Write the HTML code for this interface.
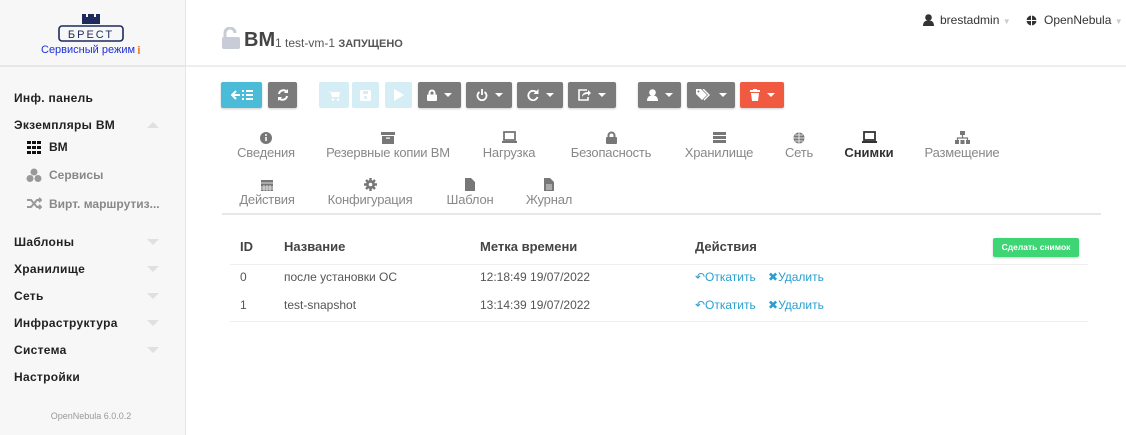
<!DOCTYPE html>
<html><head><meta charset="utf-8"><style>
*{box-sizing:border-box;margin:0;padding:0}
body{width:1126px;height:435px;background:#fff;font-family:"Liberation Sans","DejaVu Sans",sans-serif;position:relative;overflow:hidden;color:#333}
.a{position:absolute;white-space:nowrap}
#side{position:absolute;left:0;top:0;width:186px;height:435px;background:#f7f7f7;border-right:1px solid #e6e6e6}
.nav{position:absolute;left:14px;font-size:12px;font-weight:bold;color:#222;letter-spacing:.3px}
.caret{position:absolute;left:147px;width:0;height:0;border-left:6px solid transparent;border-right:6px solid transparent}
.btn{position:absolute;top:82px;height:26px;border-radius:2px;color:#fff;font-size:12px;display:flex;align-items:center;justify-content:center;gap:7px;box-shadow:0 1px 2px rgba(0,0,0,.2)}
.g{background:#7b7b7b}
.dc{width:0;height:0;border-left:4px solid transparent;border-right:4px solid transparent;border-top:4px solid #fff}
.tab{position:absolute;text-align:center;font-size:13px;color:#888;white-space:nowrap;letter-spacing:-.2px}
.tab svg{display:block;margin:0 auto 1px}
.th{position:absolute;top:239px;font-size:13px;font-weight:bold;color:#444}
.td{position:absolute;font-size:12px;color:#555}
.lk{position:absolute;font-size:12px;color:#2a9fd0}
</style></head><body>
<div id="side">
 <svg class="a" style="left:57px;top:13px" width="68" height="30" viewBox="0 0 68 30">
  <path d="M25 1h4v3h2V1h6v3h2V1h4v10H25z" fill="#1d2a5e"/>
  <rect x="2" y="13" width="64" height="15" rx="3" fill="none" stroke="#1d2a5e" stroke-width="1.6"/>
  <text x="34" y="25" text-anchor="middle" font-size="11" font-family="Liberation Sans" fill="#1d2a5e" letter-spacing="2">БРЕСТ</text>
 </svg>
 <div class="a" style="left:41px;top:44px;font-size:11px;color:#1c2fd6">Сервисный режим</div>
 <div class="a" style="left:137px;top:44px;font-size:11px;color:#f0884a;font-weight:bold">ⅰ</div>
 <div class="a" style="left:0;top:65px;width:186px;height:2px;background:#e6e6e6"></div>
 <div class="nav" style="top:91px">Инф. панель</div>
 <div class="nav" style="top:118px">Экземпляры ВМ</div>
 <div class="caret" style="top:122px;border-bottom:6px solid #e0e0e0"></div>
 <svg class="a" style="left:27px;top:141px" width="15" height="13"><g fill="#111"><rect x="0" y="0" width="4" height="3"/><rect x="5" y="0" width="4" height="3"/><rect x="10" y="0" width="4" height="3"/><rect x="0" y="5" width="4" height="3"/><rect x="5" y="5" width="4" height="3"/><rect x="10" y="5" width="4" height="3"/><rect x="0" y="10" width="4" height="3"/><rect x="5" y="10" width="4" height="3"/><rect x="10" y="10" width="4" height="3"/></g></svg>
 <div class="a" style="left:49px;top:140px;font-size:12px;font-weight:bold;color:#222">ВМ</div>
 <svg class="a" style="left:26px;top:168px" width="16" height="15"><g fill="#999"><circle cx="8" cy="4" r="3.5"/><circle cx="4" cy="10.5" r="3.5"/><circle cx="12" cy="10.5" r="3.5"/></g></svg>
 <div class="a" style="left:49px;top:168px;font-size:12px;font-weight:bold;color:#888">Сервисы</div>
 <svg class="a" style="left:26px;top:197px" width="16" height="13"><path d="M1 3h4l6 7h4M1 10h4l6-7h4M13 1l2 2-2 2M13 8l2 2-2 2" fill="none" stroke="#999" stroke-width="2"/></svg>
 <div class="a" style="left:49px;top:197px;font-size:12px;font-weight:bold;color:#888">Вирт. маршрутиз...</div>
 <div class="nav" style="top:235px">Шаблоны</div><div class="caret" style="top:239px;border-top:6px solid #e0e0e0"></div>
 <div class="nav" style="top:262px">Хранилище</div><div class="caret" style="top:266px;border-top:6px solid #e0e0e0"></div>
 <div class="nav" style="top:289px">Сеть</div><div class="caret" style="top:293px;border-top:6px solid #e0e0e0"></div>
 <div class="nav" style="top:316px">Инфраструктура</div><div class="caret" style="top:320px;border-top:6px solid #e0e0e0"></div>
 <div class="nav" style="top:343px">Система</div><div class="caret" style="top:347px;border-top:6px solid #e0e0e0"></div>
 <div class="nav" style="top:370px">Настройки</div>
 <div class="a" style="left:0;width:182px;text-align:center;top:411px;font-size:9px;color:#999">OpenNebula 6.0.0.2</div>
</div>

<svg class="a" style="left:221px;top:27px" width="19" height="22"><path d="M4 10V6a5 5 0 0 1 10 0" fill="none" stroke="#c8ccd6" stroke-width="3"/><rect x="1" y="10" width="18" height="12" rx="2" fill="#c8ccd6"/></svg>
<div class="a" style="left:244px;top:29px;font-size:20px;font-weight:bold;color:#444">ВМ</div>
<div class="a" style="left:275px;top:36px;font-size:12px;color:#555">1 test-vm-1 <b style="font-size:11px">ЗАПУЩЕНО</b></div>

<svg class="a" style="left:923px;top:14px" width="11" height="12"><circle cx="5.5" cy="3.5" r="3.3" fill="#333"/><path d="M0 12c0-4 2-5.5 5.5-5.5S11 8 11 12z" fill="#333"/></svg>
<div class="a" style="left:940px;top:13px;font-size:12px;color:#333">brestadmin <span style="color:#ccc;font-size:8px">▼</span></div>
<svg class="a" style="left:1026px;top:15px" width="11" height="11"><circle cx="5.5" cy="5.5" r="5" fill="#333"/><path d="M0.5 5.5h10M5.5 0.5v10" stroke="#fff" stroke-width="1"/></svg>
<div class="a" style="left:1044px;top:13px;font-size:12px;color:#333">OpenNebula <span style="color:#ccc;font-size:8px">▼</span></div>
<div class="a" style="left:186px;top:65px;width:940px;height:2px;background:#eee"></div>

<div class="btn" style="left:221px;width:41px;background:#4bbcd8"><svg width="22" height="12"><path d="M1 6h8M5 2L1 6l4 4" fill="none" stroke="#fff" stroke-width="2"/><path d="M11 2h2M11 6h2M11 10h2M15 2h7M15 6h7M15 10h7" stroke="#fff" stroke-width="2"/></svg></div>
<div class="btn g" style="left:268px;width:29px"><svg width="12" height="12"><path d="M2 5a4.5 4.5 0 0 1 8-2M10 7a4.5 4.5 0 0 1-8 2" fill="none" stroke="#fff" stroke-width="2"/><path d="M11 0v4H7zM1 12V8h4z" fill="#fff"/></svg></div>
<div class="btn" style="left:319px;width:30px;background:#d5eef6;box-shadow:none"><svg width="12" height="11"><path d="M0 1h2l2 6h7l1-5H3" fill="#fff"/><circle cx="5" cy="9.5" r="1.3" fill="#fff"/><circle cx="10" cy="9.5" r="1.3" fill="#fff"/></svg></div>
<div class="btn" style="left:352px;width:27px;background:#d5eef6;box-shadow:none"><svg width="11" height="11"><rect width="11" height="11" rx="1.5" fill="#fff"/><rect x="3" y="1" width="5" height="3" fill="#d5eef6"/><circle cx="5.5" cy="7.5" r="1.6" fill="#d5eef6"/></svg></div>
<div class="btn" style="left:385px;width:27px;background:#d5eef6;box-shadow:none"><svg width="10" height="12"><path d="M0 0l10 6-10 6z" fill="#fff"/></svg></div>
<div class="btn g" style="left:418px;width:43px"><svg width="10" height="12"><path d="M2.5 6V4a2.5 2.5 0 0 1 5 0v2" fill="none" stroke="#fff" stroke-width="2"/><rect y="5.5" width="10" height="6.5" rx="1" fill="#fff"/></svg><span class="dc"></span></div>
<div class="btn g" style="left:466px;width:46px"><svg width="12" height="12"><path d="M3.5 3a4.5 4.5 0 1 0 5 0" fill="none" stroke="#fff" stroke-width="1.8"/><path d="M6 0v6" stroke="#fff" stroke-width="1.8"/></svg><span class="dc"></span></div>
<div class="btn g" style="left:517px;width:46px"><svg width="12" height="12"><path d="M10 4a4.7 4.7 0 1 0 0.5 4" fill="none" stroke="#fff" stroke-width="1.8"/><path d="M11.5 0v5h-5z" fill="#fff"/></svg><span class="dc"></span></div>
<div class="btn g" style="left:568px;width:48px"><svg width="13" height="12"><path d="M9 1h-8v10h9V8" fill="none" stroke="#fff" stroke-width="1.6"/><path d="M4 8c0-3 2-5 6-5V1l3 3-3 3V5c-3 0-5 1-6 3z" fill="#fff"/></svg><span class="dc"></span></div>
<div class="btn g" style="left:638px;width:43px"><svg width="11" height="12"><circle cx="5.5" cy="3.5" r="3.3" fill="#fff"/><path d="M0 12c0-4 2-5.5 5.5-5.5S11 8 11 12z" fill="#fff"/></svg><span class="dc"></span></div>
<div class="btn g" style="left:687px;width:48px"><svg width="16" height="12"><path d="M0 0h5l6 6-5 5-6-6z" fill="#fff"/><circle cx="2.5" cy="2.5" r="1" fill="#7b7b7b"/><path d="M7 0l6 6-5 5" fill="none" stroke="#fff" stroke-width="1.4"/></svg><span class="dc"></span></div>
<div class="btn" style="left:740px;width:44px;background:#ef5a40"><svg width="10" height="12"><rect y="1" width="10" height="2" fill="#fff"/><rect x="3" y="0" width="4" height="1.5" fill="#fff"/><path d="M1 4h8l-1 8H2z" fill="#fff"/></svg><span class="dc"></span></div>

<div class="tab" style="left:230px;width:72px;top:131px"><svg width="12" height="13"><circle cx="6" cy="7" r="6" fill="#777"/><rect x="5.2" y="6" width="1.6" height="4" fill="#fff"/><circle cx="6" cy="4" r="1" fill="#fff"/></svg>Сведения</div>
<div class="tab" style="left:318px;width:140px;top:131px"><svg width="14" height="13"><rect y="1" width="14" height="3" fill="#777"/><rect x="1" y="5" width="12" height="8" fill="#777"/><rect x="5" y="6.5" width="4" height="1.2" fill="#fff"/></svg>Резервные копии ВМ</div>
<div class="tab" style="left:474px;width:70px;top:131px"><svg width="15" height="13"><rect x="2" y="1" width="11" height="8" fill="none" stroke="#777" stroke-width="1.8"/><rect x="0" y="10" width="15" height="2" fill="#777"/></svg>Нагрузка</div>
<div class="tab" style="left:564px;width:94px;top:131px"><svg width="11" height="13"><path d="M2.5 7V4.5a3 3 0 0 1 6 0V7" fill="none" stroke="#777" stroke-width="2"/><rect y="6" width="11" height="7" rx="1" fill="#777"/></svg>Безопасность</div>
<div class="tab" style="left:680px;width:78px;top:131px"><svg width="13" height="13"><rect y="1" width="13" height="3" fill="#777"/><rect y="5" width="13" height="3" fill="#777"/><rect y="9" width="13" height="3" fill="#777"/></svg>Хранилище</div>
<div class="tab" style="left:778px;width:42px;top:131px"><svg width="12" height="13"><circle cx="6" cy="7" r="5.5" fill="#777"/><path d="M0.5 7h11M6 1.5v11M2 4h8M2 10h8" stroke="#fff" stroke-width=".8"/></svg>Сеть</div>
<div class="tab" style="left:840px;width:58px;top:131px;color:#333;font-weight:bold;font-size:13px;letter-spacing:0"><svg width="15" height="13"><rect x="2" y="1" width="11" height="8" fill="none" stroke="#333" stroke-width="1.8"/><rect x="0" y="10" width="15" height="2" fill="#333"/></svg>Снимки</div>
<div class="tab" style="left:918px;width:88px;top:131px"><svg width="15" height="13"><rect x="5" y="0" width="5" height="4" fill="#777"/><path d="M7.5 4v3M2.5 9V7h10v2" fill="none" stroke="#777" stroke-width="1.2"/><rect x="0" y="9" width="4" height="4" fill="#777"/><rect x="5.5" y="9" width="4" height="4" fill="#777"/><rect x="11" y="9" width="4" height="4" fill="#777"/></svg>Размещение</div>
<div class="tab" style="left:230px;width:74px;top:178px"><svg width="12" height="13"><rect y="2" width="12" height="11" fill="#777"/><path d="M0 5h12M3 7v6M6 7v6M9 7v6M0 9h12M0 11h12" stroke="#fff" stroke-width=".7"/></svg>Действия</div>
<div class="tab" style="left:322px;width:96px;top:178px"><svg width="13" height="13"><circle cx="6.5" cy="6.5" r="4.5" fill="#777"/><path d="M6.5 0v13M0 6.5h13M2 2l9 9M11 2l-9 9" stroke="#777" stroke-width="2.4"/><circle cx="6.5" cy="6.5" r="1.8" fill="#fff"/></svg>Конфигурация</div>
<div class="tab" style="left:440px;width:60px;top:178px"><svg width="10" height="13"><path d="M0 0h6l4 4v9H0z" fill="#777"/></svg>Шаблон</div>
<div class="tab" style="left:520px;width:58px;top:178px"><svg width="10" height="13"><path d="M0 0h6l4 4v9H0z" fill="#777"/><path d="M2 7h6M2 9h6M2 11h6" stroke="#fff" stroke-width=".8"/></svg>Журнал</div>
<div class="a" style="left:222px;top:213px;width:879px;height:2px;background:#e8e8e8"></div>

<div class="th" style="left:240px">ID</div>
<div class="th" style="left:284px">Название</div>
<div class="th" style="left:480px">Метка времени</div>
<div class="th" style="left:695px">Действия</div>
<div class="a" style="left:993px;top:238px;width:86px;height:19px;background:#3ed674;border-radius:2px;color:#fff;font-size:8.5px;font-weight:bold;text-align:center;line-height:19px;box-shadow:0 1px 2px rgba(0,0,0,.2)">Сделать снимок</div>
<div class="a" style="left:230px;top:264px;width:858px;height:1px;background:#eee"></div>
<div class="td" style="left:240px;top:270px">0</div>
<div class="td" style="left:284px;top:270px">после установки ОС</div>
<div class="td" style="left:480px;top:270px">12:18:49 19/07/2022</div>
<div class="lk" style="left:695px;top:270px">↶Откатить</div>
<div class="lk" style="left:768px;top:270px"><b>✖</b>Удалить</div>
<div class="td" style="left:240px;top:298px">1</div>
<div class="td" style="left:284px;top:298px">test-snapshot</div>
<div class="td" style="left:480px;top:298px">13:14:39 19/07/2022</div>
<div class="lk" style="left:695px;top:298px">↶Откатить</div>
<div class="lk" style="left:768px;top:298px"><b>✖</b>Удалить</div>
<div class="a" style="left:230px;top:321px;width:858px;height:1px;background:#eee"></div>
</body></html>
